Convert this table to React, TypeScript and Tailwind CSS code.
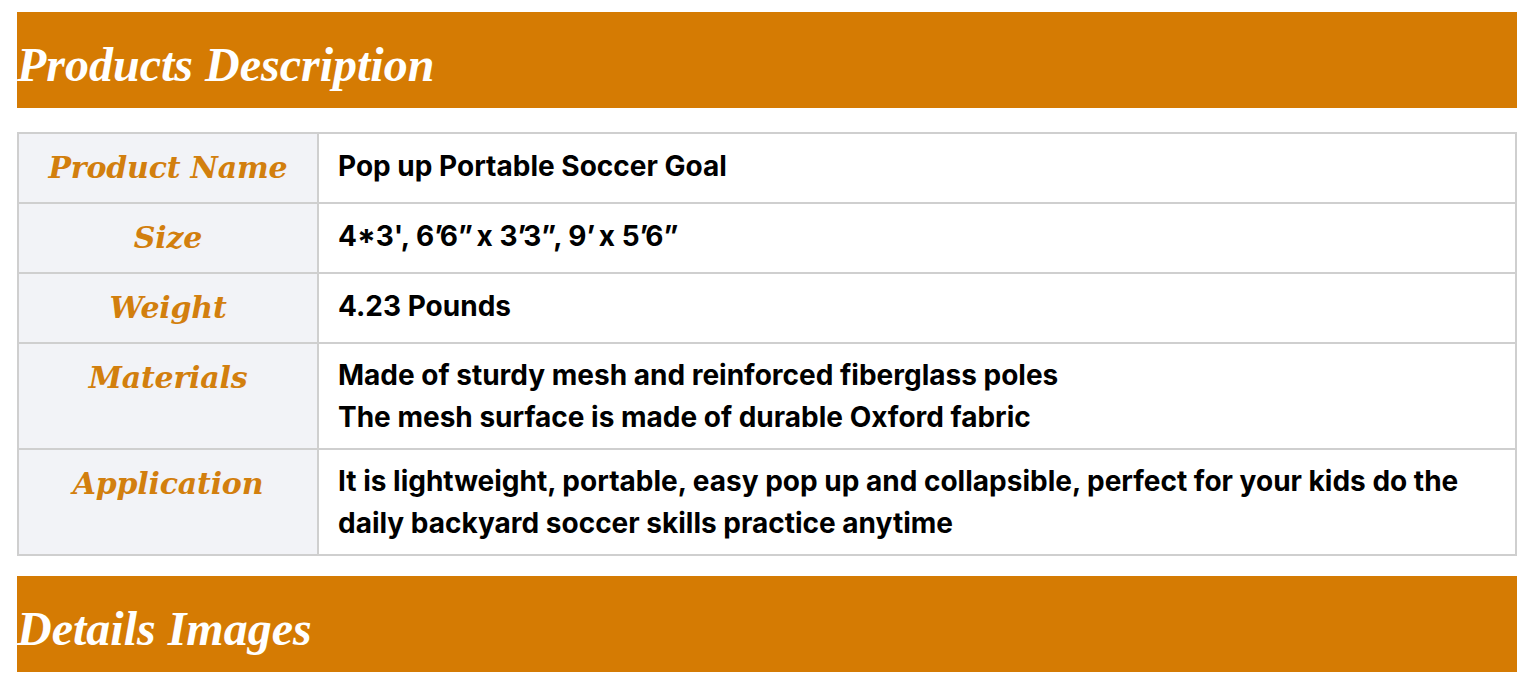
import React from "react";

type Row = { label: string; lines: React.ReactNode[] };

const Q: React.FC<{ c: string }> = ({ c }) => <span className="tracking-[-3px]">{c}</span>;

const sizeLine = (
    <>
        4*3', 6<Q c={"\u2019"} />6<Q c={"\u201d"} /> x 3<Q c={"\u2019"} />3<Q c={"\u201d"} />, 9<Q c={"\u2019"} /> x 5
        <Q c={"\u2019"} />6{"\u201d"}
    </>
);

const rows: Row[] = [
    { label: "Product Name", lines: ["Pop up Portable Soccer Goal"] },
    { label: "Size", lines: [sizeLine] },
    { label: "Weight", lines: ["4.23 Pounds"] },
    {
        label: "Materials",
        lines: [
            "Made of sturdy mesh and reinforced fiberglass poles",
            "The mesh surface is made of durable Oxford fabric",
        ],
    },
    {
        label: "Application",
        lines: [
            "It is lightweight, portable, easy pop up and collapsible, perfect for your kids do the daily backyard soccer skills practice anytime",
        ],
    },
];

const SectionTitle: React.FC<{ title: string }> = ({ title }) => (
    <div className="bg-[#d57b03] h-[96px] flex items-center">
        <h2 className="text-white italic font-bold text-[48px] leading-none pt-[10px] font-['Liberation_Serif',serif]">
            {title}
        </h2>
    </div>
);

export default function App() {
    return (
        <div className="bg-white min-h-screen px-[17px] pt-[12px] w-[1537px]">
            <div className="w-[1500px]">
                <SectionTitle title="Products Description" />
                <table className="w-full mt-[24px] border-collapse">
                    <tbody>
                        {rows.map((row) => (
                            <tr key={row.label}>
                                <td className="w-[300px] bg-[#f2f3f7] border-2 border-[#cfcfcf] text-center align-top py-[10px] text-[#d27f0e] italic font-bold text-[30px] leading-[48px] font-['DejaVu_Serif',serif] tracking-[-0.2px]">
                                    {row.label}
                                </td>
                                <td
                                    className={
                                        row.label === "Materials" || row.label === "Application"
                                            ? "border-2 border-[#cfcfcf] pl-[19px] pr-[30px] py-[10px] align-middle text-black font-bold text-[28px] leading-[42px] font-['Inter',sans-serif]"
                                            : "border-2 border-[#cfcfcf] pl-[19px] pr-[30px] pt-[8px] pb-[12px] align-middle text-black font-bold text-[28px] leading-[42px] font-['Inter',sans-serif]"
                                    }
                                >
                                    {row.lines.map((line, i) => (
                                        <div key={i}>{line}</div>
                                    ))}
                                </td>
                            </tr>
                        ))}
                    </tbody>
                </table>
                <div className="mt-[20px]">
                    <SectionTitle title="Details Images" />
                </div>
            </div>
        </div>
    );
}
